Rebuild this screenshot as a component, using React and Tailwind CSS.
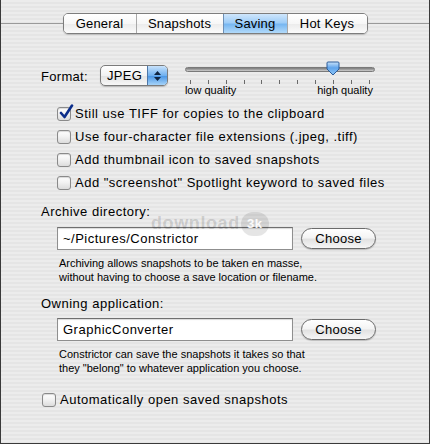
import React from "react";

const FONT = "font-['Lucida_Grande','Liberation_Sans',Arial,sans-serif]";

const TABS = [
  { label: "General", w: "w-[72px]" },
  { label: "Snapshots", w: "w-[87px]" },
  { label: "Saving", w: "w-[64px]", active: true },
  { label: "Hot Keys", w: "w-[80px]" },
];

const OPTIONS = [
  { label: "Still use TIFF for copies to the clipboard", checked: true },
  { label: "Use four-character file extensions (.jpeg, .tiff)" },
  { label: "Add thumbnail icon to saved snapshots" },
  { label: 'Add "screenshot" Spotlight keyword to saved files' },
];

const TICKS = [0, 1, 2, 3, 4, 5, 6, 7, 8, 9, 10];

function Checkbox({ checked }) {
  return (
    <span className="relative w-[14px] h-[14px] shrink-0 rounded-[3px] border border-[#8a8a8a] bg-[linear-gradient(180deg,#ffffff_0%,#f1f1f1_50%,#dcdcdc_100%)] shadow-[inset_0_1px_1px_rgba(0,0,0,0.15)]">
      {checked && (
        <svg className="absolute left-[1px] -top-[4px]" width="15" height="16" viewBox="0 0 15 16" aria-hidden="true">
          <path d="M2 9 L5.5 13 L13 1.5" fill="none" stroke="#0b2d8a" strokeWidth="2.6" strokeLinecap="round" strokeLinejoin="round" />
        </svg>
      )}
    </span>
  );
}

function CheckRow({ label, checked }) {
  return (
    <div className="flex items-center gap-[4px] h-[23px] text-[13px] tracking-[0.5px] text-black">
      <Checkbox checked={checked} />
      <span>{label}</span>
    </div>
  );
}

function AquaButton({ children }) {
  return (
    <button
      type="button"
      className="w-[75px] h-[21px] rounded-full border border-[#6b6b6b] bg-[linear-gradient(180deg,#ffffff_0%,#f4f4f4_45%,#e2e2e2_55%,#f6f6f6_100%)] text-[13px] tracking-[0.3px] text-black leading-none shadow-[0_1px_1px_rgba(0,0,0,0.2)]"
    >
      {children}
    </button>
  );
}

function TextField({ value }) {
  return (
    <div className="w-[236px] h-[23px] border border-[#8f8f8f] border-t-[#6f6f6f] bg-white flex items-center px-[5px] text-[13px] tracking-[0.5px] text-black shadow-[inset_0_1px_1px_rgba(0,0,0,0.15)]">
      {value}
    </div>
  );
}

function Slider() {
  return (
    <div className="w-[190px] pt-[1px]">
      <div className="relative h-[14px] flex items-center">
        <div className="w-full h-[5px] rounded-full bg-[linear-gradient(180deg,#7c7c7c_0%,#a9a9a9_60%,#cfcfcf_100%)] border border-[#7a7a7a]" />
        <svg className="absolute left-[141px] -top-[1px]" width="14" height="15" viewBox="0 0 14 15" aria-hidden="true">
          <defs>
            <linearGradient id="thumb" x1="0" y1="0" x2="0" y2="1">
              <stop offset="0" stopColor="#c9e3fb" />
              <stop offset="0.45" stopColor="#5fa4ec" />
              <stop offset="1" stopColor="#8ec6f6" />
            </linearGradient>
          </defs>
          <path d="M2 1 H12 Q13 1 13 2 V8 L7 14 L1 8 V2 Q1 1 2 1 Z" fill="url(#thumb)" stroke="#2c5c9a" strokeWidth="1" />
        </svg>
      </div>
      <div className="flex justify-between px-[5px] h-[8px] items-end">
        {TICKS.map((t) => (
          <span key={t} className="w-px h-[4px] bg-[#6a6a6a]" />
        ))}
      </div>
      <div className="flex justify-between text-[11px] leading-[13px] text-black pr-[2px]">
        <span>low quality</span>
        <span>high quality</span>
      </div>
    </div>
  );
}

export default function App() {
  return (
    <div
      className={`${FONT} w-[430px] h-[444px] overflow-hidden border-x border-b border-[#3a3a3a] bg-[repeating-linear-gradient(180deg,#ececec_0px,#ececec_2px,#e5e5e5_2px,#e5e5e5_4px)] text-black`}
    >
      {/* tabs */}
      <div className="flex items-center pt-[13px]">
        <div className="flex-1 h-px bg-[#9a9a9a]" />
        <div className="flex h-[21px] rounded-[5px] border border-[#7d7d7d] overflow-hidden shadow-[0_1px_1px_rgba(0,0,0,0.18)]">
          {TABS.map((t, i) => (
            <div
              key={t.label}
              className={`${t.w} flex items-center justify-center text-[13px] tracking-[0.2px] ${i > 0 ? "border-l border-[#a9a9a9]" : ""} ${
                t.active
                  ? "bg-[linear-gradient(180deg,#cfe6fc_0%,#9fcdf7_45%,#78b7f1_55%,#b2dafa_100%)] border-l-[#6d8fb5]"
                  : "bg-[linear-gradient(180deg,#ffffff_0%,#f7f7f7_50%,#ececec_55%,#fbfbfb_100%)]"
              }`}
            >
              {t.label}
            </div>
          ))}
        </div>
        <div className="flex-1 h-px bg-[#9a9a9a]" />
      </div>

      <div className="pl-[40px] pr-[40px]">
        {/* format row */}
        <div className="flex items-start mt-[31px]">
          <div className="flex items-center h-[23px] text-[13px] tracking-[0.3px]">Format:</div>
          <div className="ml-[12px] w-[68px] h-[21px] rounded-[5px] border border-[#7b7b7b] bg-[linear-gradient(180deg,#ffffff_0%,#f2f2f2_50%,#e4e4e4_55%,#f7f7f7_100%)] flex items-stretch overflow-hidden shadow-[0_1px_1px_rgba(0,0,0,0.2)]">
            <span className="flex-1 flex items-center pl-[6px] text-[13px] tracking-[0.3px]">JPEG</span>
            <span className="w-[20px] flex flex-col items-center justify-center gap-[2px] bg-[linear-gradient(180deg,#c8e2fb_0%,#6fb0ef_50%,#4d98e6_55%,#a6d3f8_100%)] border-l border-[#4d77a8]">
              <svg width="7" height="4" viewBox="0 0 7 4" aria-hidden="true"><path d="M0 4 L3.5 0 L7 4 Z" fill="#0f2440" /></svg>
              <svg width="7" height="4" viewBox="0 0 7 4" aria-hidden="true"><path d="M0 0 L3.5 4 L7 0 Z" fill="#0f2440" /></svg>
            </span>
          </div>
          <div className="ml-[17px] -mt-[4px]">
            <Slider />
          </div>
        </div>

        {/* checkboxes */}
        <div className="mt-[5px] pl-[16px]">
          {OPTIONS.map((o) => (
            <CheckRow key={o.label} label={o.label} checked={o.checked} />
          ))}
        </div>

        {/* archive */}
        <div className="mt-[10px] text-[13px] leading-[16px] tracking-[0.5px]">Archive directory:</div>
        <div className="relative">
          <div className="absolute left-[110px] -top-[10px] flex items-center gap-[1px] text-[18px] font-bold tracking-[0.6px] text-black/15 pointer-events-none select-none">
            <span>download</span>
            <span className="w-[28px] h-[24px] rounded-full bg-black/10 flex items-center justify-center text-[13px] text-white/90">3k</span>
          </div>
        </div>
        <div className="flex items-center gap-[8px] mt-[7px] pl-[16px]">
          <TextField value="~/Pictures/Constrictor" />
          <AquaButton>Choose</AquaButton>
        </div>
        <p className="mt-[6px] pl-[18px] text-[11px] leading-[14px]">
          Archiving allows snapshots to be taken en masse,
          <br />
          without having to choose a save location or filename.
        </p>

        {/* owning application */}
        <div className="mt-[12px] text-[13px] leading-[16px] tracking-[0.5px]">Owning application:</div>
        <div className="flex items-center gap-[8px] mt-[6px] pl-[16px]">
          <TextField value="GraphicConverter" />
          <AquaButton>Choose</AquaButton>
        </div>
        <p className="mt-[6px] pl-[18px] text-[11px] leading-[14px]">
          Constrictor can save the snapshots it takes so that
          <br />
          they "belong" to whatever application you choose.
        </p>

        <div className="mt-[13px] pl-[1px]">
          <CheckRow label="Automatically open saved snapshots" />
        </div>
      </div>
    </div>
  );
}
